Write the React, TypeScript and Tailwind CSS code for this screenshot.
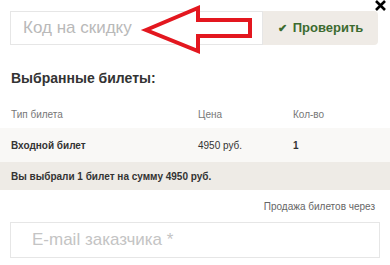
import React from "react";

const font = { fontFamily: '"Liberation Sans", Arial, sans-serif' };

const Arrow = () => (
  <svg
    className="absolute left-[140px] top-[2px]"
    width="116"
    height="54"
    viewBox="140 2 116 54"
  >
    <path
      d="M146 30 L198 8 L198 20 L250 20 L250 36 L198 36 L198 51 Z"
      fill="white"
      stroke="#e3171f"
      strokeWidth="4"
      strokeLinejoin="miter"
    />
  </svg>
);

const CloseIcon = () => (
  <svg className="absolute left-[374px] top-0" width="13" height="12" viewBox="0 0 13 12">
    <path d="M2 1 L11 10 M11 1 L2 10" stroke="#000" strokeWidth="2.6" />
  </svg>
);

export default function App() {
  return (
    <div className="relative w-[390px] h-[265px] bg-white overflow-hidden" style={font}>
      <div className="flex pl-[10px] pt-[11px] h-[45px]">
        <div className="w-[253px] h-[34px] border border-[#e6e6e6] flex items-center pl-[12px] text-[17px] text-[#b9b9b9]">
          Код на скидку
        </div>
        <button className="w-[115px] h-[34px] bg-[#efebe6] rounded-r-sm flex items-center justify-center gap-[6px] text-[13px] font-bold text-[#3d6b30]">
          <span className="text-[11px]">✔</span>
          Проверить
        </button>
      </div>
      <Arrow />
      <CloseIcon />

      <div className="h-[55px] pt-[24px] pl-[11px] text-[14px] leading-[18px] font-bold text-[#333]">
        Выбранные билеты:
      </div>

      <div className="flex items-center h-[28px] pl-[11px] text-[10px] text-[#777]">
        <div className="w-[187px]">Тип билета</div>
        <div className="w-[95px]">Цена</div>
        <div>Кол-во</div>
      </div>
      <div className="flex items-center h-[34px] pl-[11px] text-[10px] text-[#333] bg-[#f9f8f6]">
        <div className="w-[187px] font-bold">Входной билет</div>
        <div className="w-[95px]">4950 руб.</div>
        <div className="font-bold">1</div>
      </div>
      <div className="flex items-center h-[28px] pl-[11px] text-[10px] font-bold text-[#333] bg-[#eeebe6]">
        Вы выбрали 1 билет на сумму 4950 руб.
      </div>

      <div className="h-[32px] flex items-center justify-end pr-[15px] text-[10px] text-[#666]">
        Продажа билетов через
      </div>
      <div className="ml-[10px] w-[370px] h-[36px] border border-[#e6e6e6] flex items-center pl-[21px] text-[17px] text-[#c4c4c4]">
        E-mail заказчика *
      </div>
    </div>
  );
}
